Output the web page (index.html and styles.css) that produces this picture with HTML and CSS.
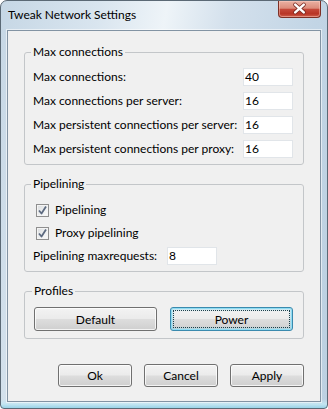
FILE: index.html
```html
<!DOCTYPE html>
<html>
<head>
<meta charset="utf-8">
<title>Tweak Network Settings</title>
<link rel="stylesheet" href="styles.css">
</head>
<body>
<div class="window">
  <div class="titlebar">
    <span class="title">Tweak Network Settings</span>
    <div class="close">
      <svg width="43" height="17" viewBox="0 0 43 17">
        <path d="M17 4.5 L26 12.5 M26 4.5 L17 12.5" stroke="#7a2a22" stroke-width="4.2" stroke-linecap="round" fill="none"/>
        <path d="M17 4.5 L26 12.5 M26 4.5 L17 12.5" stroke="#ffffff" stroke-width="2.6" stroke-linecap="round" fill="none"/>
      </svg>
    </div>
  </div>
  <div class="client">
    <fieldset class="group">
      <legend>Max connections</legend>
      <div class="rows">
        <div class="row"><span class="label">Max connections:</span><span class="field">40</span></div>
        <div class="row"><span class="label">Max connections per server:</span><span class="field">16</span></div>
        <div class="row"><span class="label">Max persistent connections per server:</span><span class="field">16</span></div>
        <div class="row"><span class="label">Max persistent connections per proxy:</span><span class="field">16</span></div>
      </div>
    </fieldset>

    <fieldset class="group group-pipe">
      <legend>Pipelining</legend>
      <div class="rows rows-pipe">
        <div class="check-row">
          <span class="checkbox"><svg width="11" height="11" viewBox="0 0 11 11"><path d="M2 5.5 L4.5 8.5 L9 1.5" stroke="#5d6a80" stroke-width="1.8" fill="none" stroke-linejoin="round"/></svg></span>
          <span class="label">Pipelining</span>
        </div>
        <div class="check-row">
          <span class="checkbox"><svg width="11" height="11" viewBox="0 0 11 11"><path d="M2 5.5 L4.5 8.5 L9 1.5" stroke="#5d6a80" stroke-width="1.8" fill="none" stroke-linejoin="round"/></svg></span>
          <span class="label">Proxy pipelining</span>
        </div>
        <div class="row row-start"><span class="label label-fixed">Pipelining maxrequests:</span><span class="field">8</span></div>
      </div>
    </fieldset>

    <fieldset class="group group-prof">
      <legend>Profiles</legend>
      <div class="profile-buttons">
        <button class="btn btn-profile">Default</button>
        <button class="btn btn-profile btn-focus">Power</button>
      </div>
    </fieldset>

    <div class="actions">
      <button class="btn btn-action">Ok</button>
      <button class="btn btn-action">Cancel</button>
      <button class="btn btn-action">Apply</button>
    </div>
  </div>
</div>
</body>
</html>
```

FILE: styles.css
```css
html, body {
  margin: 0;
  padding: 0;
  background: #ffffff;
}

body {
  font-family: Lato, "Liberation Sans", sans-serif;
  font-size: 12px;
  color: #000;
}

.window {
  box-sizing: border-box;
  width: 328px;
  height: 409px;
  border: 1px solid #5b6975;
  border-radius: 7px 7px 4px 4px;
  display: flex;
  flex-direction: column;
  background:
    linear-gradient(to top, #9ad3e8 0px, #c4e6f2 4px, rgba(200, 225, 238, 0) 9px),
    linear-gradient(100deg, #c6d7e5 0%, #d9e5ef 25%, #eef4f8 42%, #d3e0ec 58%, #c2d5e5 80%, #bcd0e1 100%);
  overflow: hidden;
}

.titlebar {
  height: 29px;
  display: flex;
  align-items: flex-start;
  padding: 0 6px 0 7px;
  flex: none;
}

.title {
  line-height: 28px;
  font-size: 12px;
  color: #000;
}

.close {
  margin-left: auto;
  width: 43px;
  height: 17px;
  box-sizing: border-box;
  border: 1px solid #7d3026;
  border-top: none;
  border-radius: 0 0 4px 4px;
  background: linear-gradient(#eab1a3 0%, #dc8c7b 45%, #c5493a 52%, #b83526 80%, #d0604e 100%);
  box-shadow: inset 0 0 0 1px rgba(255, 210, 200, 0.45);
  display: flex;
  align-items: center;
  justify-content: center;
  overflow: hidden;
}

.close svg {
  display: block;
  margin-top: -1px;
}

.client {
  flex: 1;
  margin: 0 6px 6px 6px;
  border: 1px solid #8293a3;
  box-shadow: 0 0 0 1px rgba(255, 255, 255, 0.55);
  background: #f0f0f0;
  padding: 13px 16px 0 16px;
  display: flex;
  flex-direction: column;
}

.group {
  margin: 0;
  border: 1px solid #c3c6c9;
  border-radius: 3px;
  padding: 8px 10px 6px 8px;
  min-inline-size: 0;
}

.group legend {
  padding: 0 2px;
  margin-left: -2px;
  line-height: 16px;
  font-size: 12px;
}

.group-pipe {
  margin-top: 11px;
  padding-top: 9px;
}

.group-prof {
  margin-top: 11px;
  padding: 8px 10px 7px 9px;
}

.rows {
  display: flex;
  flex-direction: column;
  gap: 6px;
}

.rows-pipe {
  gap: 5px;
}

.row {
  height: 18px;
  display: flex;
  align-items: center;
  justify-content: space-between;
}

.row-start {
  justify-content: flex-start;
}

.label {
  white-space: nowrap;
  line-height: 16px;
}

.label-fixed {
  width: 134px;
  flex: none;
}

.field {
  box-sizing: border-box;
  width: 50px;
  height: 18px;
  flex: none;
  background: #ffffff;
  border: 1px solid #e1e5e9;
  padding-left: 1px;
  line-height: 16px;
}

.check-row {
  height: 18px;
  display: flex;
  align-items: center;
  gap: 6px;
  padding-left: 3px;
}

.checkbox {
  box-sizing: border-box;
  width: 13px;
  height: 13px;
  border: 1px solid #8f8f8f;
  background: linear-gradient(135deg, #d9dbdd 0%, #eceeef 50%, #fbfbfb 100%);
  box-shadow: inset 0 0 0 1px #f4f4f4;
  display: flex;
  align-items: center;
  justify-content: center;
  flex: none;
}

.checkbox svg {
  display: block;
}

.profile-buttons {
  display: grid;
  grid-template-columns: 1fr 1fr;
  gap: 13px;
}

.btn {
  font-family: Lato, "Liberation Sans", sans-serif;
  font-size: 12px;
  color: #000;
  border: 1px solid #707070;
  border-radius: 3px;
  background: linear-gradient(#f3f3f3 0%, #ebebeb 48%, #dddddd 52%, #cfcfcf 100%);
  box-shadow: inset 0 0 0 1px rgba(255, 255, 255, 0.75);
  padding: 0;
  margin: 0;
  box-sizing: border-box;
}

.btn-profile {
  height: 24px;
}

.btn-focus {
  border-color: #3a8aae;
  box-shadow: inset 0 0 0 1px #8fdcf3, inset 0 0 2px 2px rgba(140, 215, 240, 0.5);
  outline: 1px dotted #1d3f4a;
  outline-offset: -4px;
}

.actions {
  margin-top: 25px;
  display: flex;
  justify-content: flex-end;
  gap: 12px;
}

.btn-action {
  width: 74px;
  height: 23px;
}
```
